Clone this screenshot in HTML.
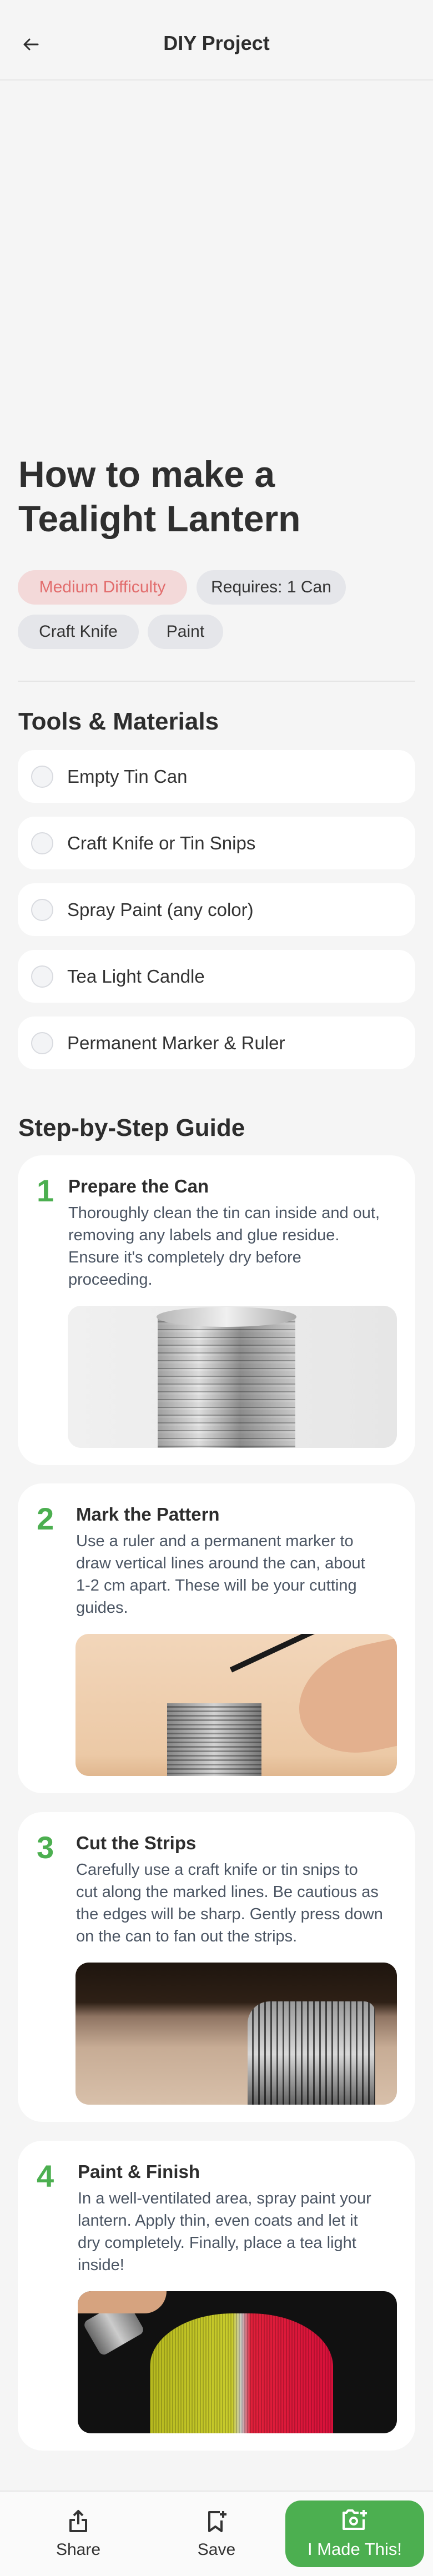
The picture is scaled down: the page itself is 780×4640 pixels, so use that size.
<!DOCTYPE html>
<html><head><meta charset="utf-8">
<style>
*{margin:0;padding:0;box-sizing:border-box}
body{width:780px;height:4640px;background:#f5f5f5;font-family:"Liberation Sans",sans-serif;color:#2d2d2d;position:relative;overflow:hidden}
.hdr{position:absolute;left:0;top:0;width:780px;height:145px;border-bottom:2px solid #e6e6e6}
.hdr h1{position:absolute;left:0;right:0;top:56px;text-align:center;font-size:36px;font-weight:700;line-height:44px}
.back{position:absolute;left:38px;top:62px}
.title{position:absolute;left:33px;top:814px;font-size:66px;font-weight:700;line-height:80px;color:#2f2f2f}
.chip{position:absolute;height:62px;border-radius:31px;background:#e5e6ea;font-size:30px;line-height:62px;text-align:center;color:#333}
.divider{position:absolute;left:32px;top:1226px;width:716px;height:2px;background:#e4e4e4}
.h2{position:absolute;left:33px;font-size:44px;font-weight:700;line-height:52px;color:#2d2d2d}
.item{position:absolute;left:32px;width:716px;height:95px;background:#fff;border-radius:30px}
.item .cb{position:absolute;left:24px;top:28px;width:40px;height:40px;border-radius:50%;border:2px solid #d9dbe0;background:#f3f4f6}
.item span{position:absolute;left:89px;top:0;line-height:95px;font-size:33px;color:#333}
.card{position:absolute;left:32px;width:716px;height:558px;background:#fff;border-radius:44px}
.num{position:absolute;left:34px;top:34px;font-size:56px;font-weight:700;color:#4caf50;line-height:60px}
.st{position:absolute;top:36px;font-size:33px;font-weight:700;line-height:40px;color:#2d2d2d}
.ds{position:absolute;top:84px;font-size:29px;line-height:40px;color:#4b5563;white-space:nowrap}
.img{position:absolute;top:271px;right:33px;height:256px;border-radius:24px;overflow:hidden}
.bar{position:absolute;left:0;top:4486px;width:780px;height:154px;background:#fafafa;border-top:2px solid #e6e6e6}
.bl{position:absolute;top:88px;font-size:30px;color:#333;text-align:center;width:200px}
.btn{position:absolute;left:514px;top:16px;width:250px;height:120px;border-radius:28px;background:#4caf50}
</style></head><body>
<div class="hdr">
<svg class="back" width="36" height="36" viewBox="0 0 24 24" fill="none" stroke="#2d2d2d" stroke-width="2" stroke-linecap="round" stroke-linejoin="round"><path d="M20 12H4M10 6l-6 6 6 6"/></svg>
<h1>DIY Project</h1>
</div>
<div class="title">How to make a<br>Tealight Lantern</div>
<div class="chip" style="left:32px;top:1027px;width:305px;background:#f3d9d9;color:#e26d6d">Medium Difficulty</div>
<div class="chip" style="left:354px;top:1027px;width:269px">Requires: 1 Can</div>
<div class="chip" style="left:32px;top:1107px;width:218px">Craft Knife</div>
<div class="chip" style="left:266px;top:1107px;width:136px">Paint</div>
<div class="divider"></div>
<div class="h2" style="top:1274px">Tools &amp; Materials</div>
<div class="item" style="top:1351px"><div class="cb"></div><span>Empty Tin Can</span></div>
<div class="item" style="top:1471px"><div class="cb"></div><span>Craft Knife or Tin Snips</span></div>
<div class="item" style="top:1591px"><div class="cb"></div><span>Spray Paint (any color)</span></div>
<div class="item" style="top:1711px"><div class="cb"></div><span>Tea Light Candle</span></div>
<div class="item" style="top:1831px"><div class="cb"></div><span>Permanent Marker &amp; Ruler</span></div>
<div class="h2" style="top:2006px">Step-by-Step Guide</div>

<div class="card" style="top:2081px">
<div class="num">1</div>
<div class="st" style="left:91px">Prepare the Can</div>
<div class="ds" style="left:91px">Thoroughly clean the tin can inside and out,<br>removing any labels and glue residue.<br>Ensure it's completely dry before<br>proceeding.</div>
<div class="img" style="left:90px;background:linear-gradient(90deg,#f0f0f0,#e6e6e6)">
<div style="position:absolute;left:162px;top:20px;width:248px;height:240px;background:repeating-linear-gradient(180deg,#e6e6e6 0 8px,#a8a9a9 8px 10px,#f0f0f0 10px 14px),linear-gradient(90deg,#b0b0b0,#f4f4f4 30%,#9a9a9a 60%,#dedede);background-blend-mode:multiply"></div>
<div style="position:absolute;left:160px;top:2px;width:252px;height:36px;background:linear-gradient(90deg,#b5b5b5,#f0f0f0,#aaa);border-radius:50%"></div>
</div>
</div>

<div class="card" style="top:2672px">
<div class="num">2</div>
<div class="st" style="left:105px">Mark the Pattern</div>
<div class="ds" style="left:105px">Use a ruler and a permanent marker to<br>draw vertical lines around the can, about<br>1-2 cm apart. These will be your cutting<br>guides.</div>
<div class="img" style="left:104px;background:linear-gradient(180deg,#f2d6ba,#ecc9a6 85%,#e0b78f)">
<div style="position:absolute;left:165px;top:125px;width:170px;height:135px;background:repeating-linear-gradient(180deg,#e0e0e0 0 5px,#999 5px 8px),linear-gradient(90deg,#999,#f0f0f0,#888);background-blend-mode:multiply"></div>
<div style="position:absolute;left:400px;top:20px;width:260px;height:190px;background:#e3b08e;border-radius:60% 20% 10% 50%;transform:rotate(-12deg)"></div>
<div style="position:absolute;left:280px;top:60px;width:260px;height:10px;background:#1a1a1a;transform:rotate(-25deg);transform-origin:left center"></div>
</div>
</div>

<div class="card" style="top:3264px">
<div class="num">3</div>
<div class="st" style="left:105px">Cut the Strips</div>
<div class="ds" style="left:105px">Carefully use a craft knife or tin snips to<br>cut along the marked lines. Be cautious as<br>the edges will be sharp. Gently press down<br>on the can to fan out the strips.</div>
<div class="img" style="left:104px;background:linear-gradient(180deg,#1e150e 0,#2e2016 28%,#8f7462 38%,#c7ac95 60%,#d8c0aa 100%)">
<div style="position:absolute;left:310px;top:70px;width:230px;height:190px;border-radius:40px 20px 0 0;background:repeating-linear-gradient(90deg,#e6e6e6 0 8px,#555 8px 11px),linear-gradient(180deg,#aaa,#f0f0f0,#666);background-blend-mode:multiply"></div>
</div>
</div>

<div class="card" style="top:3856px">
<div class="num">4</div>
<div class="st" style="left:108px">Paint &amp; Finish</div>
<div class="ds" style="left:108px">In a well-ventilated area, spray paint your<br>lantern. Apply thin, even coats and let it<br>dry completely. Finally, place a tea light<br>inside!</div>
<div class="img" style="left:108px;background:#111">
<div style="position:absolute;left:130px;top:40px;width:330px;height:240px;border-radius:45% 45% 0 0/40% 40% 0 0;background:repeating-linear-gradient(90deg,rgba(0,0,0,.18) 0 2px,transparent 2px 5px),linear-gradient(90deg,#b7ba1f 0,#c9cc2c 45%,#ccc 50%,#e0203a 55%,#d8103a 100%)"></div>
<div style="position:absolute;left:20px;top:30px;width:90px;height:70px;background:linear-gradient(90deg,#666,#ccc,#777);transform:rotate(-30deg);border-radius:10px"></div>
<div style="position:absolute;left:0;top:0;width:160px;height:40px;background:#d6a37f;border-radius:0 0 40px 0"></div>
</div>
</div>

<div class="bar">
<svg style="position:absolute;left:124px;top:32px" width="34" height="42" viewBox="0 0 34 42" fill="none" stroke="#333" stroke-width="4" stroke-linejoin="round"><path d="M17 3v24M9 11l8-8 8 8"/><path d="M11 19H3v20h28V19h-8"/></svg>
<div class="bl" style="left:41px">Share</div>
<svg style="position:absolute;left:374px;top:34px" width="34" height="40" viewBox="0 0 34 40" fill="none" stroke="#333" stroke-width="4" stroke-linejoin="round"><path d="M22 3H3v34l11-8 11 8V18"/><path d="M28 1v12M22 7h12"/></svg>
<div class="bl" style="left:290px">Save</div>
<div class="btn">
<svg style="position:absolute;left:102px;top:16px" width="46" height="38" viewBox="0 0 46 38" fill="none" stroke="#fff" stroke-width="4" stroke-linejoin="round"><path d="M30 6H22l-3-4h-8l-3 4H3v29h36V18"/><circle cx="21" cy="21" r="6"/><path d="M39 1v12M33 7h12"/></svg>
<div style="position:absolute;left:0;right:0;top:68px;text-align:center;color:#fff;font-size:31px;line-height:40px">I Made This!</div>
</div>
</div>
</body></html>
